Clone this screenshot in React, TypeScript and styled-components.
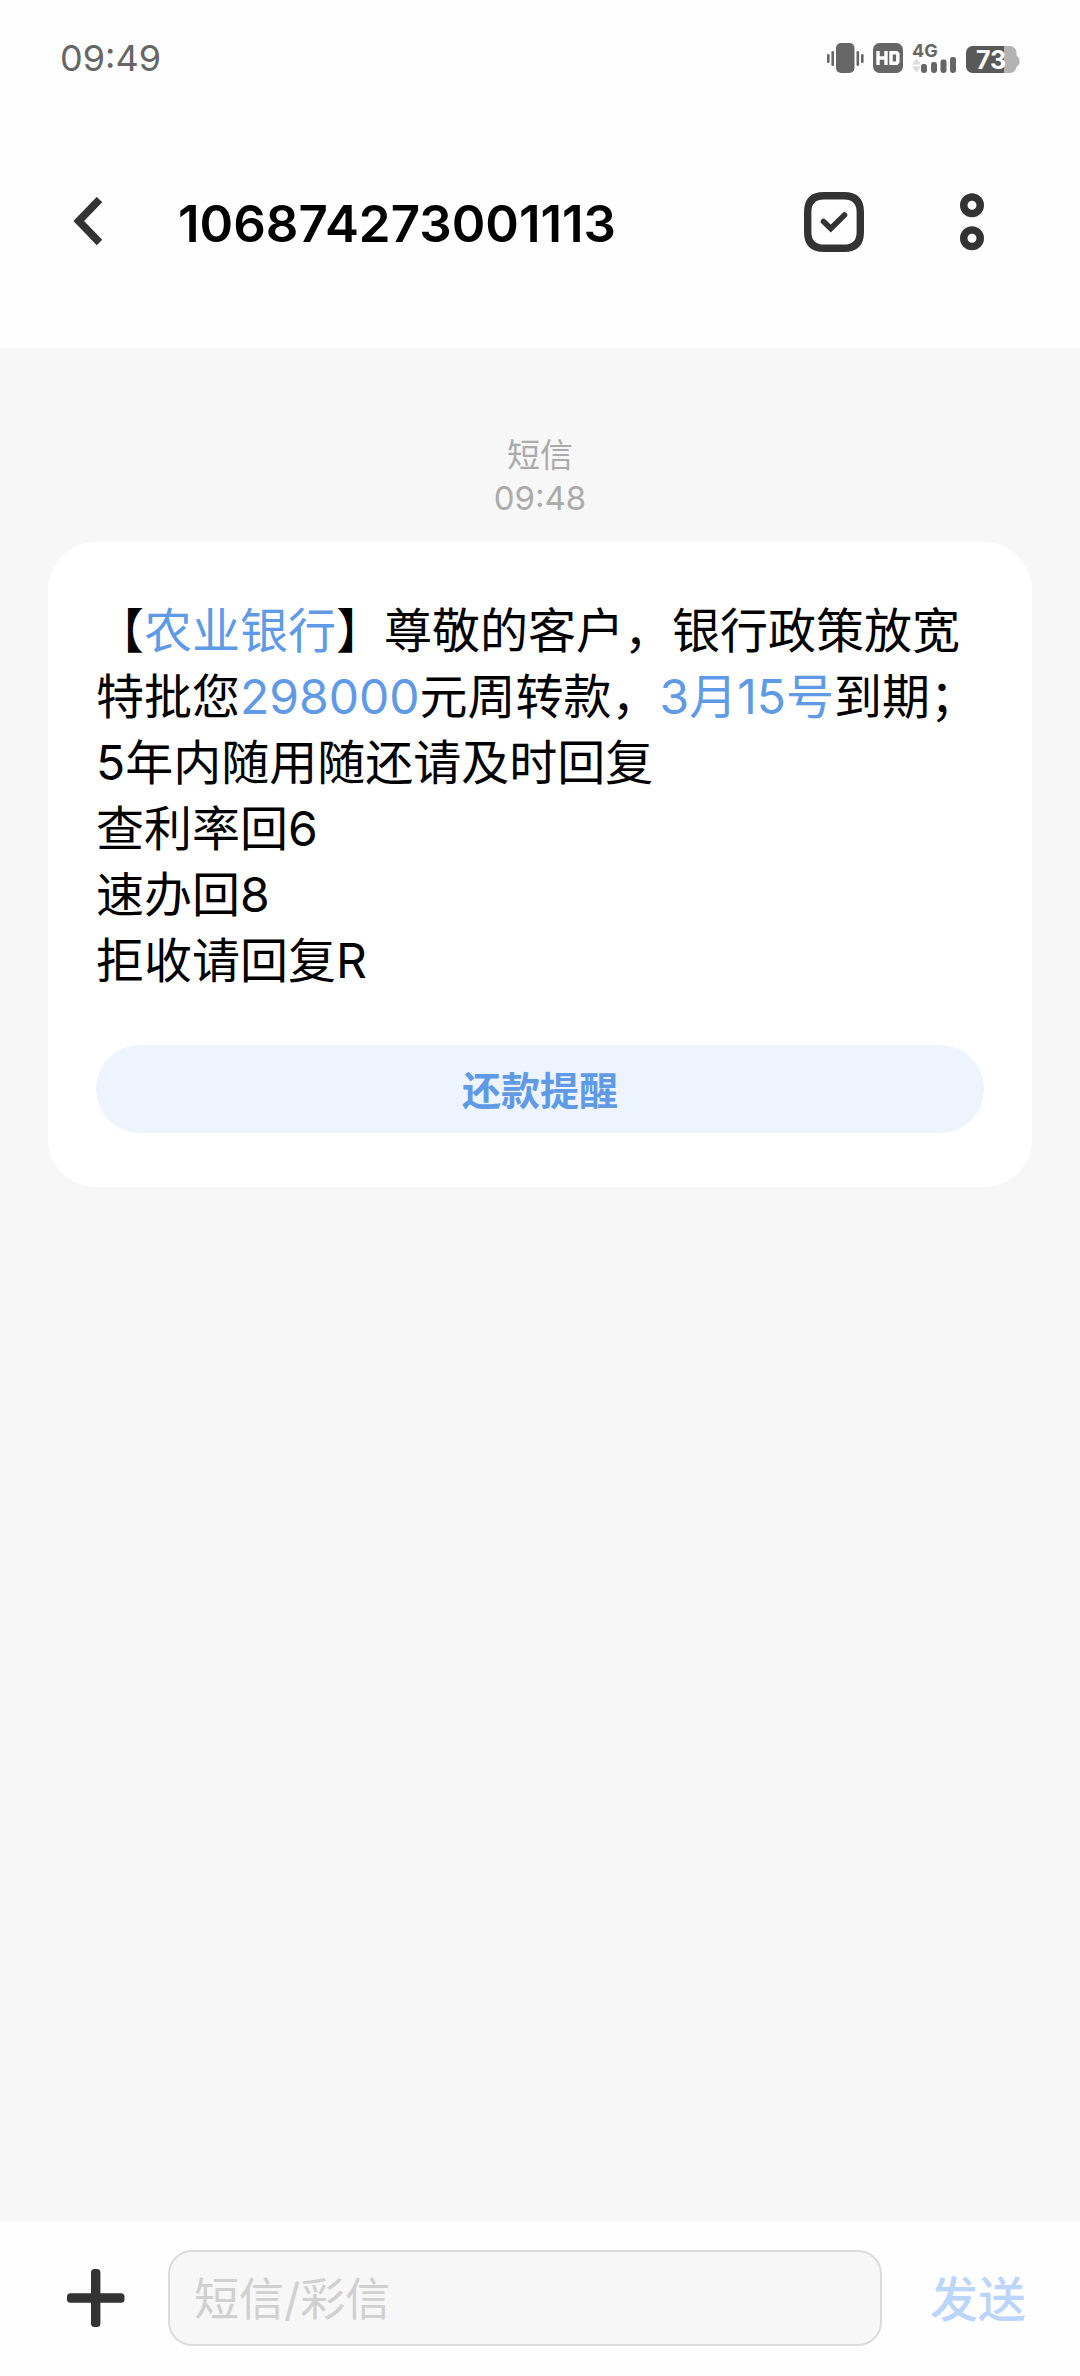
import React from "react";
import styled, { createGlobalStyle } from "styled-components";

const GlobalStyle = createGlobalStyle`
  * { box-sizing: border-box; }
  body {
    margin: 0;
    background: #f7f7f7;
    font-family: Inter, "Noto Sans CJK SC", sans-serif;
  }
  button, input { font-family: inherit; }
`;

const Screen = styled.div`
  display: flex;
  flex-direction: column;
  min-height: 100vh;
  background: #f7f7f7;
`;

const Header = styled.header`
  background: #fefefe;
  padding-bottom: 20px;
`;

const StatusBar = styled.div`
  display: flex;
  align-items: center;
  justify-content: space-between;
  height: 116px;
  padding: 0 60px;
`;

const Clock = styled.time`
  font-size: 36px;
  line-height: 44px;
  color: #666;
`;

const StatusIcons = styled.div`
  display: flex;
  align-items: center;
  gap: 9px;
  svg { display: block; }
`;

const Toolbar = styled.div`
  display: flex;
  align-items: center;
  height: 212px;
  padding: 0 96px 0 72px;
`;

const IconButton = styled.button<{ $width: number }>`
  display: flex;
  flex: none;
  width: ${(p) => p.$width}px;
  padding: 0;
  border: 0;
  background: none;
  color: #333;
  svg { display: block; }
`;

const Title = styled.h1`
  flex: 1;
  margin: 0 0 0 76px;
  padding-top: 4px;
  font-size: 51px;
  line-height: 60px;
  font-weight: 600;
  color: #000;
`;

const Actions = styled.div`
  display: flex;
  align-items: center;
  gap: 96px;
`;

const Thread = styled.main`
  flex: 1;
  padding: 86px 48px 48px;
`;

const Stamp = styled.div`
  display: flex;
  flex-direction: column;
  align-items: center;
  padding-bottom: 22px;
  font-size: 33px;
  line-height: 43px;
  color: #ababab;
`;

const Card = styled.article`
  padding: 56px 48px 54px;
  border-radius: 48px;
  background: #fff;
`;

const Message = styled.p`
  margin: 0 0 51px;
  font-size: 48px;
  line-height: 66px;
  color: #000;
`;

const Link = styled.a`
  color: #609ae6;
  text-decoration: none;
`;

const CardButton = styled.button`
  display: block;
  width: 100%;
  height: 88px;
  padding: 3px 0 0;
  border: 0;
  border-radius: 44px;
  background: #edf4fe;
  font-size: 39px;
  line-height: 48px;
  font-weight: 700;
  color: #609ae6;
`;

const Composer = styled.form`
  display: flex;
  align-items: center;
  padding: 28px 54px 30px 67px;
  background: #fefefe;
`;

const Field = styled.input`
  flex: 1;
  min-width: 0;
  height: 96px;
  margin: 0 48px 0 43px;
  padding: 3px 24px 0;
  border: 2px solid #dcdcdc;
  border-radius: 24px;
  background: #f7f7f7;
  font-size: 45px;
  color: #000;
  &::placeholder { color: #d0d0d0; opacity: 1; }
`;

const SendButton = styled.button`
  flex: none;
  padding: 3px 0 0;
  border: 0;
  background: none;
  font-size: 48px;
  line-height: 66px;
  font-weight: 500;
  color: #bbd6fa;
`;

const VibrateIcon = () => (
  <svg width="37" height="30" viewBox="0 0 37 30" fill="#666" aria-label="震动">
    <rect x="0" y="11" width="2.6" height="9" rx="1.3" />
    <rect x="4.4" y="8" width="2.6" height="15" rx="1.3" />
    <rect x="9" y="0" width="18.5" height="30" rx="5" />
    <rect x="29.5" y="8" width="2.6" height="15" rx="1.3" />
    <rect x="34" y="11" width="2.6" height="9" rx="1.3" />
  </svg>
);

const HdIcon = () => (
  <svg width="30" height="30" viewBox="0 0 30 30" aria-label="HD">
    <rect width="30" height="30" rx="6.5" fill="#666" />
    <g fill="none" stroke="#fff" strokeWidth="3.4">
      <path d="M5 8v14M13 8v14M5 15h8" />
      <path d="M18 9.7h5.6l1.2 1.2v8.2l-1.2 1.2H18z" />
    </g>
  </svg>
);

const SignalIcon = () => (
  <svg width="45" height="30" viewBox="0 0 45 30" fill="#666" overflow="visible">
    <text x="0" y="14" fontSize="18" fontWeight="700" fontFamily="Inter, sans-serif">4G</text>
    <path d="M4.5 15.5l4.500 6H0zM4.5 29.5l4.500-6H0z" fill="#dcdcdc" />
    <rect x="9" y="21" width="6" height="9" rx="2.4" />
    <rect x="19" y="19" width="6" height="11" rx="2.4" />
    <rect x="28.5" y="16.5" width="6" height="13.5" rx="2.4" />
    <rect x="38" y="14" width="6" height="16" rx="2.4" />
  </svg>
);

const BatteryIcon = () => (
  <svg width="54" height="30" viewBox="0 0 54 30" overflow="visible">
    <path d="M38 3h6a6.500 6.500 0 0 1 6.500 6.500V12l3 4v5l-3 3a6.500 6.500 0 0 1-6.500 6h-6z" fill="#b3b3b3" />
    <path d="M6.5 3H38v27H6.500A6.500 6.500 0 0 1 0 23.500v-14A6.500 6.500 0 0 1 6.500 3z" fill="#595959" />
    <text x="10" y="25.5" fontSize="25" fontWeight="700" fontFamily="Inter, sans-serif" fill="#fff">73</text>
  </svg>
);

const BackIcon = () => (
  <svg width="30" height="50" viewBox="0 0 30 50" fill="none" stroke="currentColor" strokeWidth="7.6">
    <path d="M27.5 2.5L6.7 24l20.8 21.5" />
  </svg>
);

const CheckIcon = () => (
  <svg width="60" height="60" viewBox="0 0 60 60" fill="none" stroke="currentColor">
    <path
      d="M20 3.700h20Q56.300 3.700 56.300 20v20Q56.300 56.300 40 56.300H20Q3.700 56.300 3.700 40V20Q3.700 3.700 20 3.700z"
      strokeWidth="7.4"
    />
    <path d="M19.5 29.5l7.300 7L40.500 23" strokeWidth="5.6" strokeLinecap="round" />
  </svg>
);

const MoreIcon = () => (
  <svg width="24" height="58" viewBox="0 0 24 58" fill="none" stroke="currentColor" strokeWidth="7.5">
    <circle cx="12" cy="12.3" r="8.25" />
    <circle cx="12" cy="45.3" r="8.25" />
  </svg>
);

const PlusIcon = () => (
  <svg width="58" height="58" viewBox="0 0 58 58" fill="currentColor">
    <rect x="24" y="0" width="9.4" height="58" rx="3.5" />
    <rect x="0" y="24.3" width="57.5" height="9.4" rx="3.5" />
  </svg>
);

export default function App() {
  return (
    <Screen>
      <GlobalStyle />
      <Header>
        <StatusBar>
          <Clock>09:49</Clock>
          <StatusIcons>
            <VibrateIcon />
            <HdIcon />
            <SignalIcon />
            <BatteryIcon />
          </StatusIcons>
        </StatusBar>
        <Toolbar>
          <IconButton type="button" $width={30} aria-label="返回">
            <BackIcon />
          </IconButton>
          <Title>106874273001113</Title>
          <Actions>
            <IconButton type="button" $width={60} aria-label="选择">
              <CheckIcon />
            </IconButton>
            <IconButton type="button" $width={24} aria-label="更多">
              <MoreIcon />
            </IconButton>
          </Actions>
        </Toolbar>
      </Header>
      <Thread>
        <Stamp>
          <span>短信</span>
          <time>09:48</time>
        </Stamp>
        <Card>
          <Message>
            【<Link href="#bank">农业银行</Link>】尊敬的客户，银行政策放宽
            <br />
            特批您<Link href="#amount">298000</Link>元周转款，<Link href="#date">3月15号</Link>到期；
            <br />
            5年内随用随还请及时回复
            <br />
            查利率回6
            <br />
            速办回8
            <br />
            拒收请回复R
          </Message>
          <CardButton type="button">还款提醒</CardButton>
        </Card>
      </Thread>
      <Composer onSubmit={(e) => e.preventDefault()}>
        <IconButton type="button" $width={58} aria-label="添加">
          <PlusIcon />
        </IconButton>
        <Field type="text" placeholder="短信/彩信" aria-label="短信/彩信" />
        <SendButton type="submit">发送</SendButton>
      </Composer>
    </Screen>
  );
}
